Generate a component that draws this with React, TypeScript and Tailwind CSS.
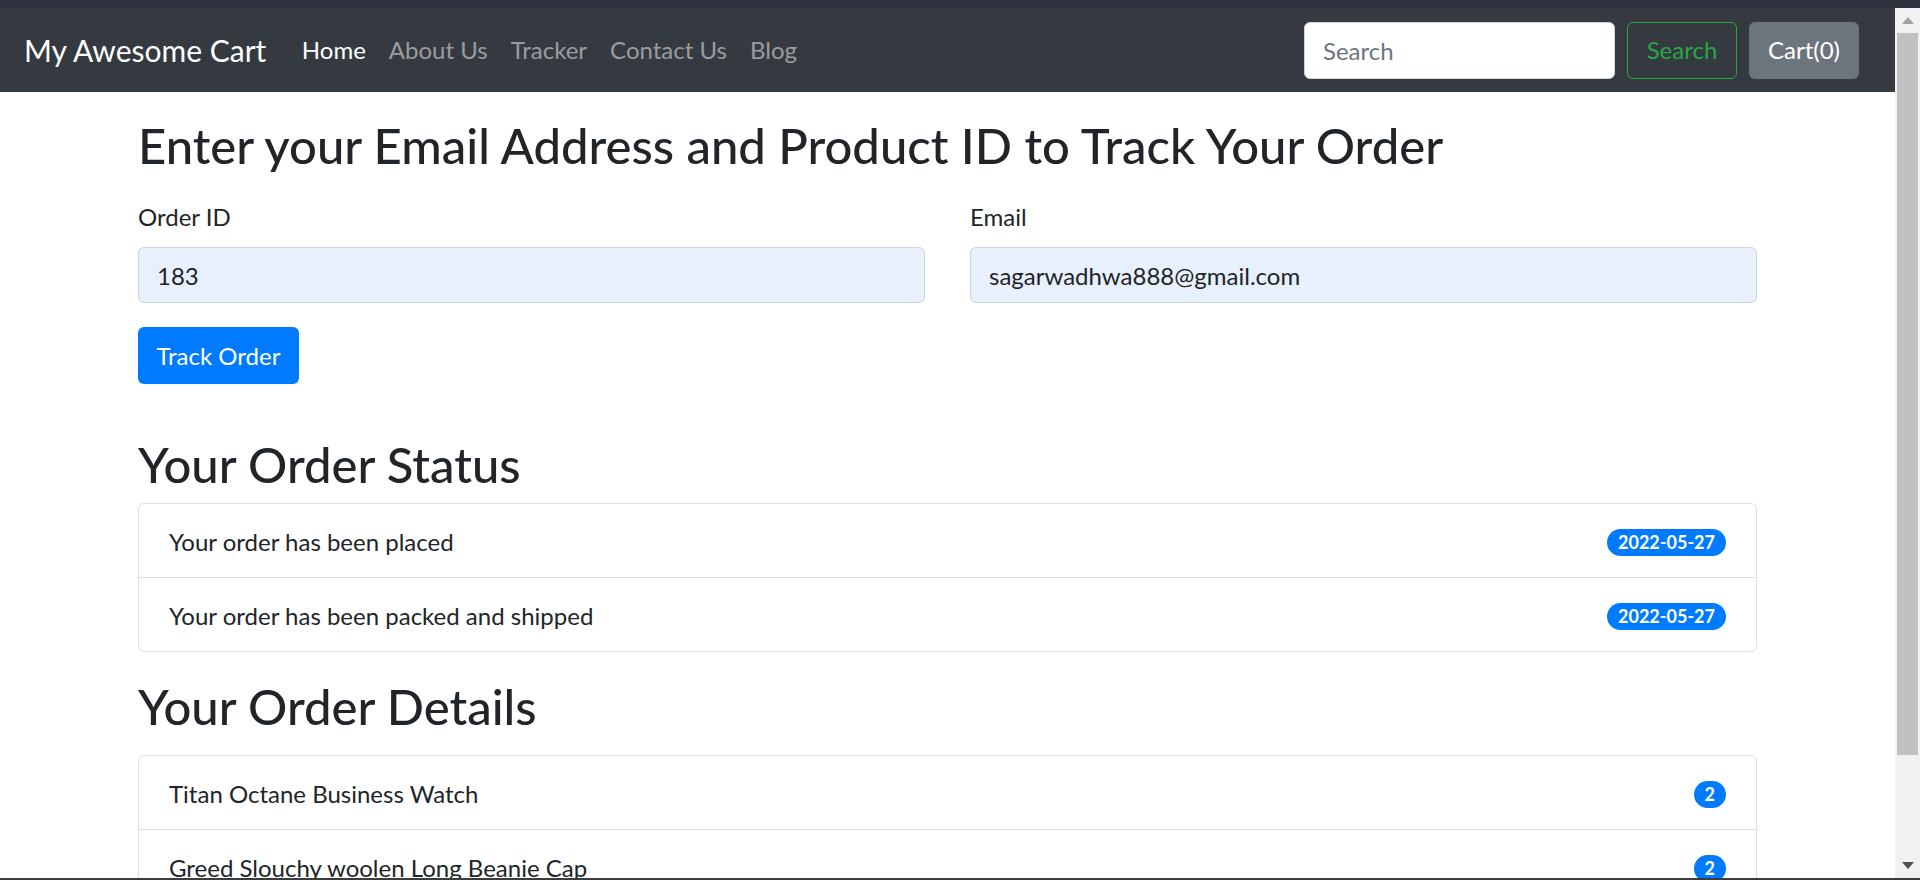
import { useState } from 'react';

const statusRows = [
  { text: 'Your order has been placed', date: '2022-05-27' },
  { text: 'Your order has been packed and shipped', date: '2022-05-27' },
];

const detailRows = [
  { name: 'Titan Octane Business Watch', qty: 2 },
  { name: 'Greed Slouchy woolen Long Beanie Cap', qty: 2 },
  { name: 'Classic Leather Wallet', qty: 1 },
];

const navLinks = ['Home', 'About Us', 'Tracker', 'Contact Us', 'Blog'];

function Badge({ children }: { children: React.ReactNode }) {
  return (
    <span className="inline-flex items-center h-[27px] px-[11px] rounded-full bg-[#007bff] text-white text-[18px] font-bold leading-none">
      {children}
    </span>
  );
}

export default function App() {
  const [orderId, setOrderId] = useState('183');
  const [email, setEmail] = useState('sagarwadhwa888@gmail.com');

  return (
    <div className="h-[880px] w-full overflow-hidden flex flex-col bg-white text-[#212529] font-['Lato',sans-serif]">
      {/* window strip */}
      <div className="h-[8px] shrink-0 bg-[#2e323e]" />

      <div className="flex flex-1 min-h-0">
        <div className="flex-1 min-w-0 overflow-hidden">
          {/* Navbar */}
          <nav className="h-[84px] bg-[#343a40] flex items-center pl-[24px] pr-[36px]">
            <a className="text-white text-[30px] leading-none mr-[24px]">My Awesome Cart</a>
            <ul className="flex items-center">
              {navLinks.map((l, i) => (
                <li key={l}>
                  <a className={`px-[11.5px] text-[24px] ${i === 0 ? 'text-white' : 'text-white/50'}`}>{l}</a>
                </li>
              ))}
            </ul>
            <div className="ml-auto flex items-center gap-[12px]">
              <input
                placeholder="Search"
                className="w-[311px] h-[57px] rounded-[6px] bg-white border border-[#ced4da] px-[18px] text-[24px] text-[#495057] placeholder:text-[#6c757d] outline-none"
              />
              <button className="w-[110px] h-[57px] rounded-[6px] border border-[#28a745] text-[#28a745] text-[24px]">
                Search
              </button>
              <button className="w-[110px] h-[57px] rounded-[6px] bg-[#6c757d] text-white text-[24px]">
                Cart(0)
              </button>
            </div>
          </nav>

          {/* Content */}
          <main className="px-[138px]">
            <h2 className="mt-[24px] text-[49px] leading-[58px] font-medium">
              Enter your Email Address and Product ID to Track Your Order
            </h2>

            <div className="mt-[25px] grid grid-cols-2 gap-[45px]">
              <div>
                <label className="block text-[24px] leading-[36px] mb-[12px]">Order ID</label>
                <input
                  value={orderId}
                  onChange={(e) => setOrderId(e.target.value)}
                  className="w-full h-[56px] rounded-[6px] bg-[#e8f0fe] border border-[#ced4da] px-[18px] text-[24px] text-[#212529] outline-none"
                />
              </div>
              <div>
                <label className="block text-[24px] leading-[36px] mb-[12px]">Email</label>
                <input
                  value={email}
                  onChange={(e) => setEmail(e.target.value)}
                  className="w-full h-[56px] rounded-[6px] bg-[#e8f0fe] border border-[#ced4da] px-[18px] text-[24px] text-[#212529] outline-none"
                />
              </div>
            </div>

            <button className="mt-[24px] h-[57px] w-[161px] rounded-[6px] bg-[#007bff] text-white text-[24px]">
              Track Order
            </button>

            <h2 className="mt-[51px] text-[49px] leading-[58px] font-medium">Your Order Status</h2>
            <ul className="mt-[10px] border border-[#dfdfdf] rounded-[6px]">
              {statusRows.map((r, i) => (
                <li
                  key={i}
                  className={`flex items-center justify-between px-[30px] pt-[20px] pb-[17px] text-[24px] leading-[36px] ${
                    i > 0 ? 'border-t border-[#dfdfdf]' : ''
                  }`}
                >
                  <span>{r.text}</span>
                  <Badge>{r.date}</Badge>
                </li>
              ))}
            </ul>

            <h2 className="mt-[25px] text-[49px] leading-[58px] font-medium">Your Order Details</h2>
            <ul className="mt-[20px] border border-[#dfdfdf] rounded-[6px]">
              {detailRows.map((r, i) => (
                <li
                  key={i}
                  className={`flex items-center justify-between px-[30px] pt-[20px] pb-[17px] text-[24px] leading-[36px] ${
                    i > 0 ? 'border-t border-[#dfdfdf]' : ''
                  }`}
                >
                  <span>{r.name}</span>
                  <Badge>{r.qty}</Badge>
                </li>
              ))}
            </ul>
          </main>
        </div>

        {/* Scrollbar */}
        <div className="w-[25px] shrink-0 bg-[#f1f1f1] flex flex-col">
          <div className="h-[25px] flex items-center justify-center">
            <svg width="12" height="7" viewBox="0 0 12 7">
              <polygon points="6,0 12,7 0,7" fill="#a3a3a3" />
            </svg>
          </div>
          <div className="mx-[2px] h-[722px] bg-[#c1c1c1]" />
          <div className="flex-1" />
          <div className="h-[25px] flex items-center justify-center">
            <svg width="12" height="7" viewBox="0 0 12 7">
              <polygon points="0,0 12,0 6,7" fill="#505050" />
            </svg>
          </div>
        </div>
      </div>

      <div className="h-[2px] shrink-0 bg-[#3c3c3c]" />
    </div>
  );
}
